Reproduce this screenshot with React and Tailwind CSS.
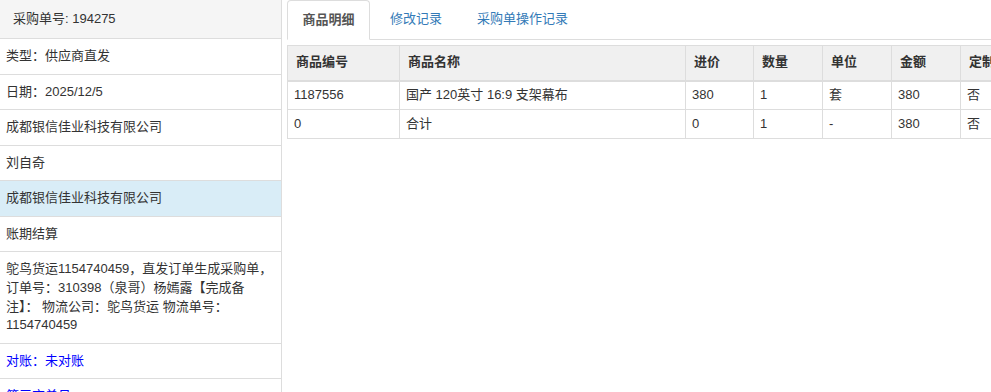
import React from "react";

const font = {
  fontFamily: '"Liberation Sans", "Noto Sans CJK SC", Arial, sans-serif',
};

const infoRows = [
  { text: "类型：供应商直发" },
  { text: "日期：2025/12/5" },
  { text: "成都银信佳业科技有限公司" },
  { text: "刘自奇" },
  { text: "成都银信佳业科技有限公司", active: true },
  { text: "账期结算" },
  {
    text: "鸵鸟货运1154740459，直发订单生成采购单，订单号：310398（泉哥）杨嫣露【完成备注】： 物流公司：鸵鸟货运 物流单号：1154740459",
  },
  { text: "对账：未对账", link: true },
  { text: "第三方单号：—", link: true },
];

const columns = [
  { label: "商品编号", w: "w-[112px]" },
  { label: "商品名称", w: "w-[286px]" },
  { label: "进价", w: "w-[68px]" },
  { label: "数量", w: "w-[69px]" },
  { label: "单位", w: "w-[69px]" },
  { label: "金额", w: "w-[69px]" },
  { label: "定制", w: "w-[69px]" },
];

const rows = [
  ["1187556", "国产 120英寸 16:9 支架幕布", "380", "1", "套", "380", "否"],
  ["0", "合计", "0", "1", "-", "380", "否"],
];

export default function App() {
  return (
    <div
      className="flex h-[392px] w-[991px] overflow-hidden bg-white text-[13px] leading-[18.57px] text-[#333]"
      style={font}
    >
      {/* left info panel */}
      <div className="w-[282px] shrink-0 border-r border-[#ddd]">
        <div className="flex h-[39px] items-center border-b border-[#ddd] bg-[#f5f5f5] pl-[13px]">
          采购单号: 194275
        </div>
        {infoRows.map((r, i) => (
          <div
            key={i}
            className={`border-b border-[#ddd] px-[6px] py-[8px] ${
              r.active ? "bg-[#d9edf7]" : ""
            } ${r.link ? "text-[#0000ff]" : ""}`}
          >
            {r.text}
          </div>
        ))}
      </div>

      {/* main */}
      <div className="min-w-0 flex-1 pl-[5px]">
        <div className="flex h-[40px] border-b border-[#ddd]">
          <div className="-mb-px flex w-[83px] items-center justify-center rounded-t-[4px] border border-b-white border-[#ddd] bg-white font-bold text-[#555]">
            商品明细
          </div>
          <div className="flex items-center pl-[20px] text-[#337ab7]">
            修改记录
          </div>
          <div className="flex items-center pl-[35px] text-[#337ab7]">
            采购单操作记录
          </div>
        </div>

        <div className="mt-[5px] overflow-hidden">
          <table className="w-[742px] table-fixed border-collapse border border-[#ddd]">
            <thead>
              <tr className="bg-[#f0f0f0]">
                {columns.map((c) => (
                  <th
                    key={c.label}
                    className={`${c.w} h-[35px] border border-b-2 border-[#ddd] px-[8px] text-left font-bold`}
                  >
                    {c.label}
                  </th>
                ))}
              </tr>
            </thead>
            <tbody>
              {rows.map((r, i) => (
                <tr key={i}>
                  {r.map((cell, j) => (
                    <td
                      key={j}
                      className="h-[29px] border border-[#ddd] px-[6px] text-left"
                    >
                      {cell}
                    </td>
                  ))}
                </tr>
              ))}
            </tbody>
          </table>
        </div>
      </div>
    </div>
  );
}
